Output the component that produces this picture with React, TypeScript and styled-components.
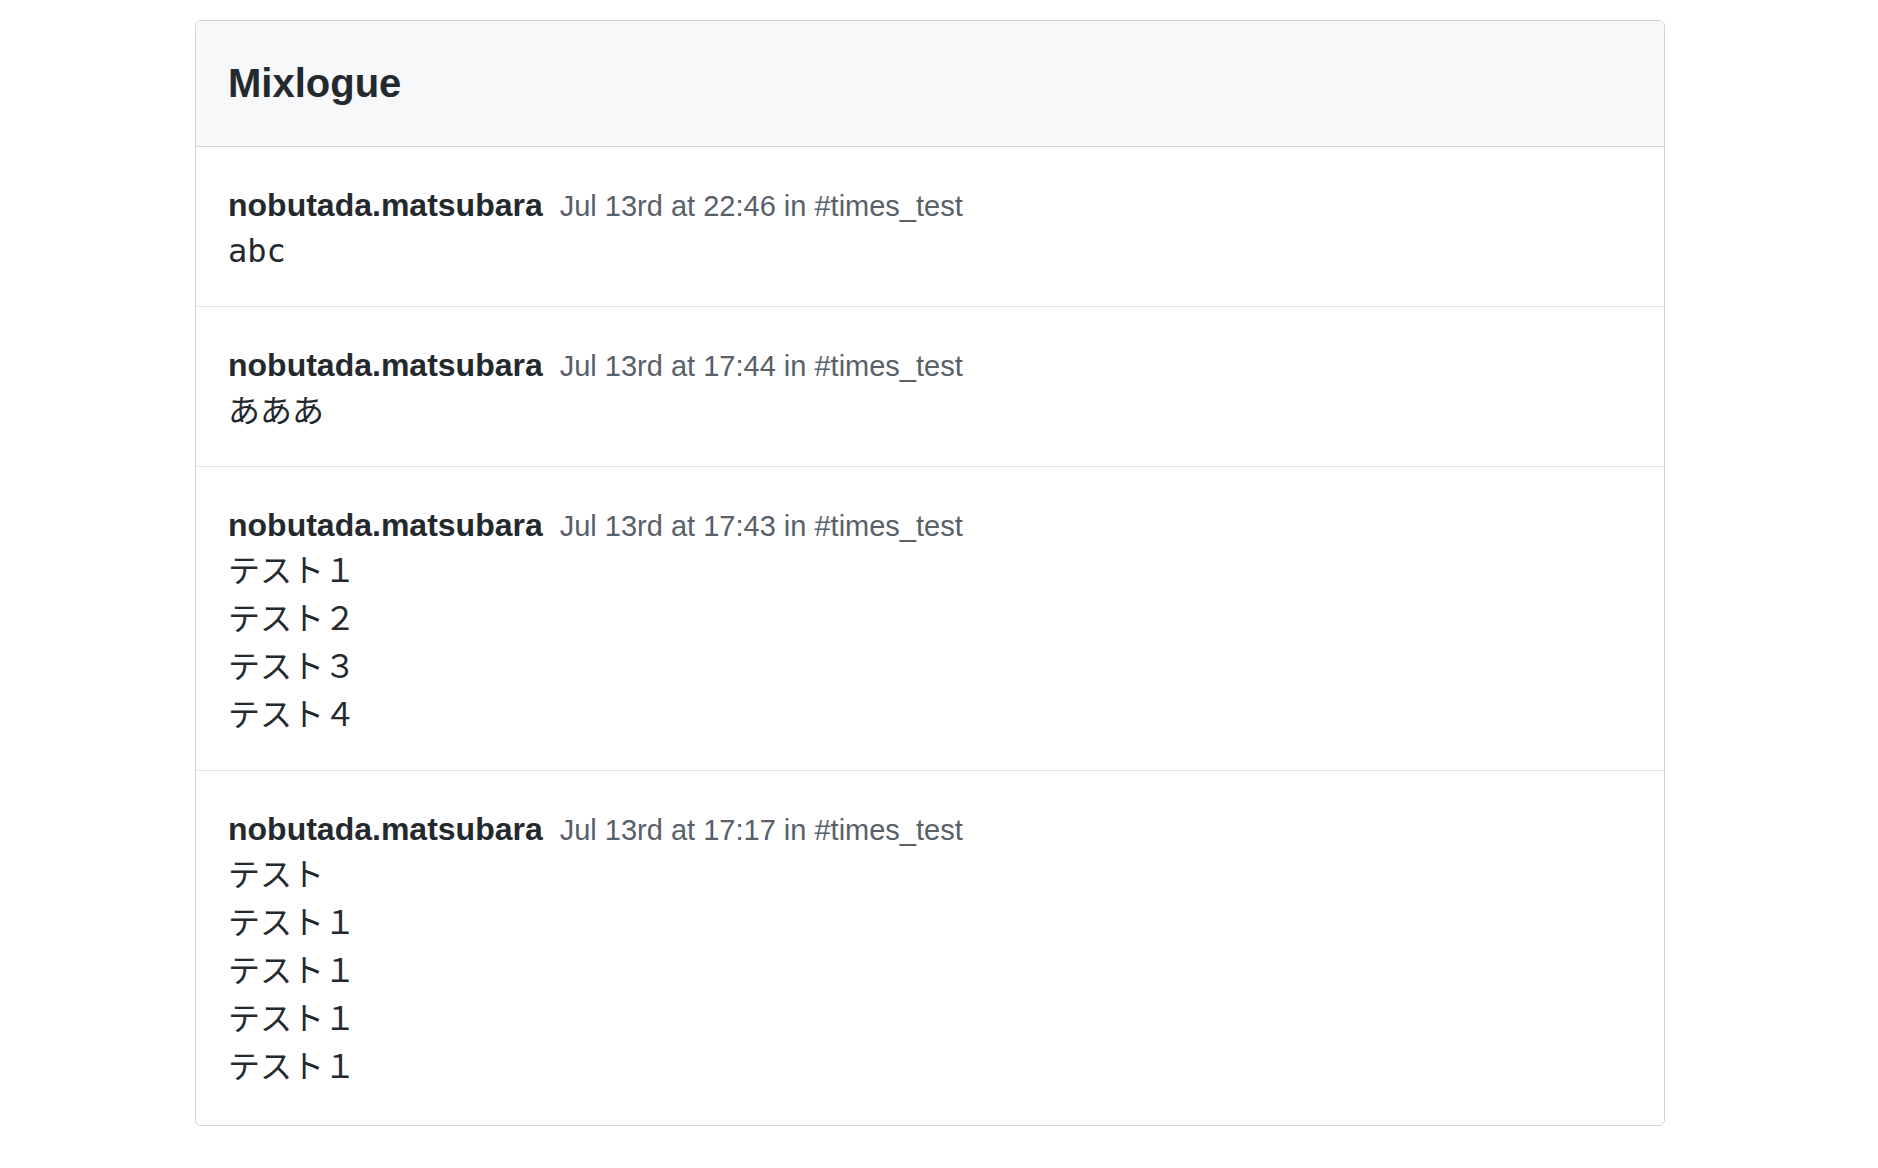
import React from "react";
import styled, { createGlobalStyle } from "styled-components";

const GlobalStyle = createGlobalStyle`
  html, body {
    margin: 0;
    padding: 0;
    background: #ffffff;
  }
  * { box-sizing: border-box; }
`;

const Page = styled.div`
  padding: 20px 0 40px 195px;
  font-family: "Liberation Sans", Arial, "Noto Sans CJK JP", sans-serif;
  color: #24292e;
`;

const Box = styled.section`
  width: 1470px;
  border: 1px solid #d1d5da;
  border-radius: 6px;
  background: #ffffff;
  overflow: hidden;
`;

const BoxHeader = styled.header`
  background: #f6f8fa;
  border-bottom: 1px solid #d1d5da;
  padding: 32px 32px;
`;

const Title = styled.h3`
  margin: 0;
  font-size: 40px;
  line-height: 61px;
  font-weight: 700;
`;

const Row = styled.article`
  padding: 32px 32px 31px;
  border-top: 1px solid #e1e4e8;
  &:first-of-type {
    border-top: none;
  }
  &:last-of-type {
    padding-bottom: 34px;
  }
`;

const MetaLine = styled.div`
  display: flex;
  align-items: baseline;
  height: 48px;
  padding-top: 4px;
  line-height: 44px;
`;

const User = styled.span`
  font-size: 32px;
  font-weight: 700;
  color: #24292e;
`;

const Meta = styled.span`
  margin-left: 17px;
  font-size: 29px;
  color: #586069;
`;

const Body = styled.div`
  font-family: "DejaVu Sans Mono", "Liberation Mono", "Noto Sans CJK JP", monospace;
  font-size: 32px;
  line-height: 48px;
  white-space: pre-wrap;
  color: #24292e;
`;

type Message = { user: string; meta: string; text: string };

const messages: Message[] = [
  { user: "nobutada.matsubara", meta: "Jul 13rd at 22:46 in #times_test", text: "abc" },
  { user: "nobutada.matsubara", meta: "Jul 13rd at 17:44 in #times_test", text: "あああ" },
  {
    user: "nobutada.matsubara",
    meta: "Jul 13rd at 17:43 in #times_test",
    text: "テスト１\nテスト２\nテスト３\nテスト４",
  },
  {
    user: "nobutada.matsubara",
    meta: "Jul 13rd at 17:17 in #times_test",
    text: "テスト\nテスト１\nテスト１\nテスト１\nテスト１",
  },
];

export default function App() {
  return (
    <>
      <GlobalStyle />
      <Page>
        <Box>
          <BoxHeader>
            <Title>Mixlogue</Title>
          </BoxHeader>
          <div>
            {messages.map((m, i) => (
              <Row key={i}>
                <MetaLine>
                  <User>{m.user}</User>
                  <Meta>{m.meta}</Meta>
                </MetaLine>
                <Body>{m.text}</Body>
              </Row>
            ))}
          </div>
        </Box>
      </Page>
    </>
  );
}
